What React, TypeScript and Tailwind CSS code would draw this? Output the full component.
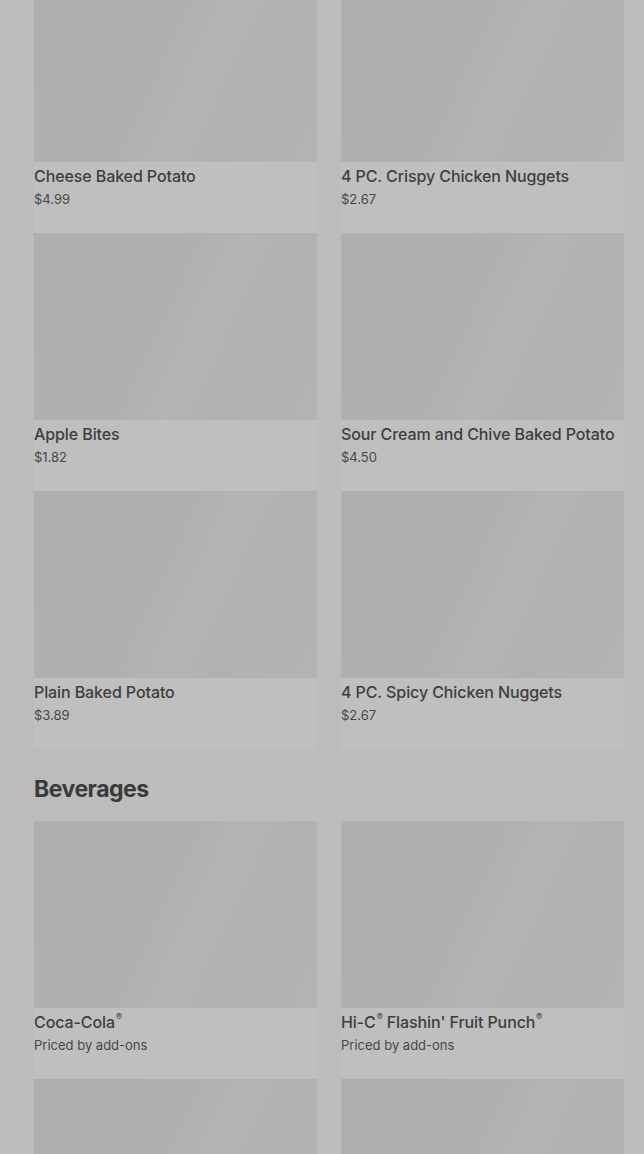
const sections = [
  {
    title: "",
    items: [
      { name: "Cheese Baked Potato", price: "$4.99" },
      { name: "4 PC. Crispy Chicken Nuggets", price: "$2.67" },
      { name: "Apple Bites", price: "$1.82" },
      { name: "Sour Cream and Chive Baked Potato", price: "$4.50" },
      { name: "Plain Baked Potato", price: "$3.89" },
      { name: "4 PC. Spicy Chicken Nuggets", price: "$2.67" },
    ],
  },
  {
    title: "Beverages",
    items: [
      { name: "Coca-Cola®", price: "Priced by add-ons" },
      { name: "Hi-C® Flashin' Fruit Punch®", price: "Priced by add-ons" },
      { name: "", price: "" },
      { name: "", price: "" },
    ],
  },
];

// small raised ® like the menu uses
const withMarks = (text: string) =>
  text.split("®").map((part, i, arr) => (
    <span key={i}>
      {part}
      {i < arr.length - 1 && <span className="text-[9px] leading-none align-top ml-px">®</span>}
    </span>
  ));

const ItemCard = ({ name, price }: { name: string; price: string }) => {
  return (
    <div className="bg-[#bfbfbf] pb-6">
      <div className="h-[187px] bg-[linear-gradient(115deg,#afafaf_0%,#b0b0b0_45%,#b4b4b4_58%,#b1b1b1_72%,#b3b3b3_100%)]" />
      <div className="mt-1 text-base leading-5 font-medium tracking-[-0.1px] text-[#3e3e3e] whitespace-nowrap">
        {withMarks(name)}
      </div>
      <div className="mt-[3px] text-[13px] leading-5 text-[#484848]">{price}</div>
    </div>
  );
};

const App = () => {
  return (
    <div
      className="h-[1154px] overflow-hidden bg-[#bcbcbc]"
      style={{ fontFamily: "Inter, 'Liberation Sans', sans-serif" }}
    >
      <div className="-mt-[25px] pl-[34px] pr-5">
        {sections.map((section, i) => (
          <section key={i}>
            {section.title && (
              <h2 className="mt-6 mb-4 text-[23px] leading-8 font-bold tracking-[-0.5px] text-[#3a3a3a]">
                {section.title}
              </h2>
            )}
            <div className="grid grid-cols-2 gap-x-6">
              {section.items.map((item, j) => (
                <ItemCard key={j} name={item.name} price={item.price} />
              ))}
            </div>
          </section>
        ))}
      </div>
    </div>
  );
};

export default App;
